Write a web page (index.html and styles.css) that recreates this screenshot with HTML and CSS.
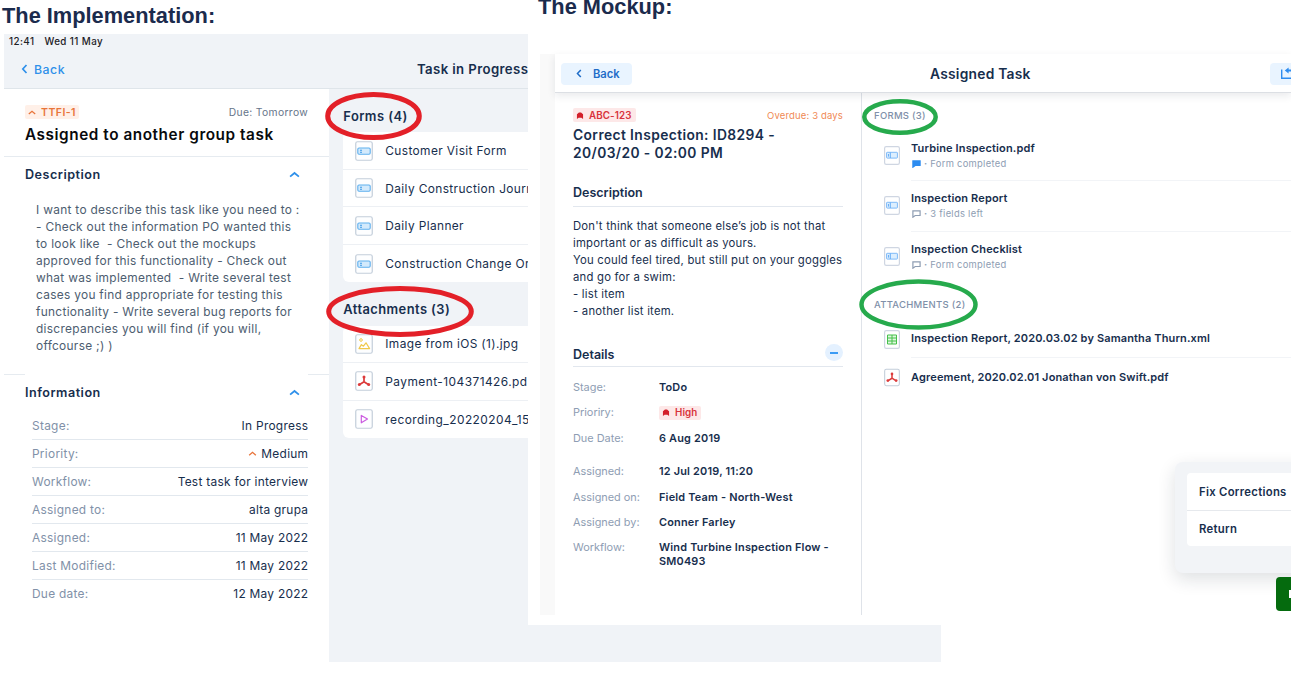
FILE: index.html
```html
<!DOCTYPE html>
<html lang="en">
<head>
<meta charset="utf-8">
<title>Task screens comparison</title>
<link rel="stylesheet" href="styles.css">
</head>
<body>
<svg class="defs" width="0" height="0">
  <symbol id="form" viewBox="0 0 18 20"><rect x=".75" y=".75" width="16.5" height="18.5" rx="1.8" fill="#fdfeff" stroke="#c3ceda" stroke-width="1.2"/><rect x="2.8" y="7" width="12.4" height="6.2" rx="1.2" fill="#d3eafc" stroke="#5fb0ee" stroke-width="1.1"/><path d="M5 9.2h2M5 11.2h2" stroke="#3d9be8" stroke-width="1.1"/></symbol>
  <symbol id="form2" viewBox="0 0 16 19"><rect x=".6" y=".6" width="14.8" height="17.8" rx="1.6" fill="#fff" stroke="#cfd6e2" stroke-width="1.2"/><rect x="2.6" y="6.3" width="10.8" height="5.8" rx=".6" fill="#dceefe" stroke="#7db9f8"/><path d="M4.5 8v2.6M6.3 6.5v5.5" stroke="#5aa6f5" stroke-width=".9"/></symbol>
  <symbol id="image" viewBox="0 0 18 20"><rect x=".75" y=".75" width="16.5" height="18.5" rx="1.8" fill="#fdfeff" stroke="#c3ceda" stroke-width="1.2"/><path d="M4 14.6l2.4-4 2 1.6 2.6-3.4 3.6 5.8z" fill="none" stroke="#f0c84a" stroke-width="1.2" stroke-linejoin="round"/><circle cx="6" cy="6" r="1.3" fill="none" stroke="#f0c84a"/></symbol>
  <symbol id="pdf" viewBox="0 0 18 20"><rect x=".75" y=".75" width="16.5" height="18.5" rx="1.8" fill="#fff" stroke="#c3ceda" stroke-width="1.2"/><path d="M9 6v4.800L4.300 13.700M9 10.800l4.700 2.900" fill="none" stroke="#dc3b3b" stroke-width="1.7"/><circle cx="9" cy="6" r="1.5" fill="#dc3b3b"/><circle cx="4.3" cy="13.5" r="1.5" fill="#dc3b3b"/><circle cx="13.7" cy="13.5" r="1.5" fill="#dc3b3b"/></symbol>
  <symbol id="video" viewBox="0 0 18 20"><rect x=".75" y=".75" width="16.5" height="18.5" rx="1.8" fill="#fdfeff" stroke="#c3ceda" stroke-width="1.2"/><path d="M6.3 6.4v7.4l6.2-3.7z" fill="none" stroke="#cb5be0" stroke-width="1.2" stroke-linejoin="round"/></symbol>
  <symbol id="sheet" viewBox="0 0 16 19"><rect x=".6" y=".6" width="14.8" height="17.8" rx="1.6" fill="#fff" stroke="#cfd6e2" stroke-width="1.2"/><path d="M3.500 5h9v9h-9zM3.500 8h9M3.500 11h9M8 5v9" fill="#e0f7e0" stroke="#45c04b" stroke-width="1"/></symbol>
  <symbol id="up" viewBox="0 0 10 6"><path d="M1 5l4-3.4L9 5" fill="none" stroke="currentColor" stroke-width="1.6"/></symbol>
  <symbol id="left" viewBox="0 0 6 10"><path d="M5 1L1.3 5 5 9" fill="none" stroke="currentColor" stroke-width="1.7"/></symbol>
  <symbol id="high" viewBox="0 0 8 8"><path d="M.5 2.600L2.800.5h2.400l2.300 2.100V8L5.600 6.600H2.400L.5 8z" fill="#d3202a"/></symbol>
  <symbol id="bubble" viewBox="0 0 9 8"><path d="M.9.9h7.2v4.6H3.2L.9 7.2z" fill="var(--bubble, none)" stroke="currentColor" stroke-width="1.2"/></symbol>
</svg>

<section class="impl">
  <h1 class="caption">The Implementation:</h1>
  <div class="ipad">
    <header class="ibar">
      <div class="status"><span>12:41</span><span>Wed 11 May</span></div>
      <div class="inav">
        <a class="iback"><svg width="7" height="10"><use href="#left"/></svg><span>Back</span></a>
        <span class="ititle">Task in Progress</span>
      </div>
    </header>
    <div class="ibody">
      <aside class="iside">
        <div class="ihead">
          <div class="split"><span class="badge orange"><svg width="8" height="5"><use href="#up"/></svg><span>TTFI-1</span></span><span class="idue">Due: Tomorrow</span></div>
          <h2 class="iname">Assigned to another group task</h2>
        </div>
        <div class="isec"><span>Description</span><svg width="11" height="7"><use href="#up"/></svg></div>
        <p class="idesc">I want to describe this task like you need to :<br>- Check out the information PO wanted this<br>to look like&nbsp; - Check out the mockups<br>approved for this functionality - Check out<br>what was implemented&nbsp; - Write several test<br>cases you find appropriate for testing this<br>functionality - Write several bug reports for<br>discrepancies you will find (if you will,<br>offcourse ;) )</p>
        <div class="irule"></div>
        <div class="isec info"><span>Information</span><svg width="11" height="7"><use href="#up"/></svg></div>
        <dl class="irows">
          <div><dt>Stage:</dt><dd>In Progress</dd></div>
          <div><dt>Priority:</dt><dd><svg width="9" height="5"><use href="#up"/></svg><span>Medium</span></dd></div>
          <div><dt>Workflow:</dt><dd>Test task for interview</dd></div>
          <div><dt>Assigned to:</dt><dd>alta grupa</dd></div>
          <div><dt>Assigned:</dt><dd>11 May 2022</dd></div>
          <div><dt>Last Modified:</dt><dd>11 May 2022</dd></div>
          <div><dt>Due date:</dt><dd>12 May 2022</dd></div>
        </dl>
      </aside>
      <main class="imain">
        <h3 class="ilabel">Forms (4)</h3>
        <ul class="ilist">
          <li><svg width="18" height="20"><use href="#form"/></svg><span>Customer Visit Form</span></li>
          <li><svg width="18" height="20"><use href="#form"/></svg><span>Daily Construction Journ</span></li>
          <li><svg width="18" height="20"><use href="#form"/></svg><span>Daily Planner</span></li>
          <li><svg width="18" height="20"><use href="#form"/></svg><span>Construction Change Or</span></li>
        </ul>
        <h3 class="ilabel">Attachments (3)</h3>
        <ul class="ilist">
          <li><svg width="18" height="20"><use href="#image"/></svg><span>Image from iOS (1).jpg</span></li>
          <li><svg width="18" height="20"><use href="#pdf"/></svg><span class="wide">Payment-104371426.pd</span></li>
          <li><svg width="18" height="20"><use href="#video"/></svg><span class="wide">recording_20220204_15</span></li>
        </ul>
      </main>
    </div>
  </div>
</section>

<section class="mock">
  <h1 class="caption">The Mockup:</h1>
  <div class="mapp">
    <header class="mbar">
      <a class="mback"><svg width="6" height="9"><use href="#left"/></svg><span>Back</span></a>
      <span class="mtitle">Assigned Task</span>
      <a class="mshare"><svg width="14" height="12" viewBox="0 0 14 12"><path d="M1.700 1.600v8.700H13" fill="none" stroke="#2d8cf0" stroke-width="1.4"/><path d="M4.800 2.600L8.600-.4v2H13v2H8.600v2z" fill="#2d8cf0"/></svg></a>
    </header>
    <div class="mbody">
      <aside class="mside">
        <div class="split"><span class="badge red"><svg width="8" height="7"><use href="#high"/></svg><span>ABC-123</span></span><span class="mdue">Overdue: 3 days</span></div>
        <h2 class="mname">Correct Inspection: ID8294 -<br>20/03/20 - 02:00 PM</h2>
        <h3 class="msec">Description</h3>
        <p class="mdesc">Don't think that someone else’s job is not that<br>important or as difficult as yours.<br>You could feel tired, but still put on your goggles<br>and go for a swim:<br>- list item<br>- another list item.</p>
        <h3 class="msec details"><span>Details</span><i class="minus"></i></h3>
        <dl class="mrows">
          <dt>Stage:</dt><dd>ToDo</dd>
          <dt>Prioriry:</dt><dd><span class="badge red"><svg width="8" height="7"><use href="#high"/></svg><span>High</span></span></dd>
          <dt>Due Date:</dt><dd>6 Aug 2019</dd>
          <dt>Assigned:</dt><dd>12 Jul 2019, 11:20</dd>
          <dt>Assigned on:</dt><dd>Field Team - North-West</dd>
          <dt>Assigned by:</dt><dd>Conner Farley</dd>
          <dt>Workflow:</dt><dd>Wind Turbine Inspection Flow -<br>SM0493</dd>
        </dl>
      </aside>
      <main class="mmain">
        <h4 class="mlabel">FORMS (3)</h4>
        <ul class="mlist forms">
          <li><svg width="16" height="19"><use href="#form2"/></svg><div><b>Turbine Inspection.pdf</b><small class="filled"><svg width="9" height="8"><use href="#bubble"/></svg><span><strong>·</strong> Form completed</span></small></div></li>
          <li><svg width="16" height="19"><use href="#form2"/></svg><div><b>Inspection Report</b><small><svg width="9" height="8"><use href="#bubble"/></svg><span><strong>·</strong> 3 fields left</span></small></div></li>
          <li><svg width="16" height="19"><use href="#form2"/></svg><div><b>Inspection Checklist</b><small><svg width="9" height="8"><use href="#bubble"/></svg><span><strong>·</strong> Form completed</span></small></div></li>
        </ul>
        <h4 class="mlabel">ATTACHMENTS (2)</h4>
        <ul class="mlist files">
          <li><svg width="16" height="19"><use href="#sheet"/></svg><div><b>Inspection Report, 2020.03.02 by Samantha Thurn.xml</b></div></li>
          <li><svg width="16" height="19"><use href="#pdf"/></svg><div><b>Agreement, 2020.02.01 Jonathan von Swift.pdf</b></div></li>
        </ul>
      </main>
    </div>
  </div>
  <div class="menu"><div class="menu-items"><div>Fix Corrections</div><div>Return</div></div></div>
  <div class="go"><i></i></div>
</section>
<svg class="rings" width="1291" height="676" fill="none">
  <g stroke="#e32028" stroke-width="5"><ellipse cx="373.5" cy="116" rx="45.8" ry="21.6"/><ellipse cx="400" cy="311.5" rx="71.3" ry="22.9"/></g>
  <g stroke="#26aa4c" stroke-width="4.5"><ellipse cx="900" cy="117" rx="35.7" ry="15.7"/><ellipse cx="918.5" cy="304.5" rx="57" ry="23"/></g>
</svg>
</body>
</html>
```
FILE: styles.css
```css
* { box-sizing: border-box; }
body { margin: 0; width: 1291px; height: 676px; position: relative; overflow: hidden; background: #fff; color: #172e4d; font-family: Inter, "Liberation Sans", sans-serif; }
h1, h2, h3, h4, p, ul, dl, dd { margin: 0; padding: 0; }
ul { list-style: none; }
svg { flex: none; }
.defs { position: absolute; }
.caption { font: bold 21.8px/26px "Liberation Sans", Arial, sans-serif; color: #1b2b4d; white-space: nowrap; }
.split { display: flex; justify-content: space-between; align-items: center; }
.badge { display: inline-flex; align-items: center; height: 14px; border-radius: 2px; font-weight: 600; }

/* Implementation: iPad screen */
.impl { padding: 3px 0 0 2px; width: 941px; }
.ipad { margin: 5px 0 0 2px; width: 937px; height: 628px; background: #f0f3f7; }
.ibar { height: 55px; border-bottom: 1px solid #dfe5ea; }
.status { display: flex; gap: 10px; padding: 1px 0 0 5px; font-size: 9.8px; line-height: 14px; font-weight: 500; letter-spacing: .42px; color: #1d2126; }
.inav { display: flex; align-items: center; height: 40px; padding-left: 17px; }
.iback { display: flex; align-items: center; gap: 6px; width: 396px; font-size: 12.3px; font-weight: 500; letter-spacing: .5px; color: #2e90ea; }
.ititle { font-size: 13.2px; font-weight: 600; letter-spacing: .38px; white-space: nowrap; }
.ibody { display: flex; height: 573px; }
.iside { width: 325px; background: #fff; }
.ihead { height: 68px; padding: 16px 21px 0; border-bottom: 1px solid #e6ebf0; }
.orange { gap: 5px; padding: 0 3px; background: #fff0e8; color: #e8743a; font-size: 10.5px; letter-spacing: .45px; }
.idue { font-size: 10.3px; letter-spacing: .35px; color: #66758a; }
.iname { margin-top: 5px; font-size: 15.3px; line-height: 21px; font-weight: 600; letter-spacing: .57px; color: #080a0d; white-space: nowrap; }
.isec { display: flex; justify-content: space-between; align-items: center; height: 36px; padding: 0 29px 2px 21px; font-size: 12.6px; font-weight: 600; letter-spacing: .5px; }
.isec svg { color: #2e90ea; }
.info { padding-bottom: 0; }
.idesc { padding: 8px 0 0 32px; font-size: 11.9px; line-height: 17.05px; letter-spacing: .3px; color: #4d5d70; white-space: nowrap; }
.irule { height: 1px; margin-top: 19.5px; display: flex; justify-content: space-between; }
.irule::before, .irule::after { content: ""; width: 21px; height: 1px; background: #e6ebf0; }
.irows { margin: 1px 20.7px 0 28px; font-size: 11.9px; letter-spacing: .28px; }
.irows > div { display: flex; justify-content: space-between; align-items: center; height: 27.95px; border-bottom: 1px solid #e2e8ee; }
.irows > div:last-child { border: 0; }
.irows dt { color: #8191a8; }
.irows dd { display: flex; align-items: center; gap: 4px; }
.irows dd svg { color: #e8743a; }
.imain { flex: 1; padding-left: 14.3px; }
.ilabel { height: 43.3px; padding-top: 19px; font-size: 12.9px; line-height: 18px; font-weight: 600; letter-spacing: .44px; }
.ilist { background: #fff; border-radius: 6px; }
.ilist li { display: flex; align-items: center; gap: 12px; height: 37.5px; padding-left: 12px; border-bottom: 1px solid #edf0f4; font-size: 11.9px; letter-spacing: .38px; white-space: nowrap; }
.ilist li:last-child { border: 0; }
.ilist .wide { letter-spacing: .46px; }

/* Mockup: laid over the right part of the iPad screen */
.mock { position: absolute; left: 528px; top: 0; width: 763px; height: 625px; overflow: hidden; background: #fff; }
.mock .caption { margin: -6px 0 0 10px; }
.mapp { margin: 34px 0 0 12px; height: 561px; border-left: 15px solid #f9f9f9; }
.mbar { position: relative; display: flex; align-items: center; height: 39px; padding-left: 6px; border-bottom: 1px solid #dcdfe4; box-shadow: 0 3px 8px #15203018; }
.mback { flex: none; display: flex; align-items: center; gap: 11px; width: 71px; height: 22px; margin-top: 1px; padding-left: 15px; border-radius: 4px; background: #e9f4ff; color: #1f6dc8; font-size: 11.2px; font-weight: 600; }
.mtitle { margin: 2px 0 0 298px; font-size: 13.8px; font-weight: 600; letter-spacing: .25px; white-space: nowrap; }
.mshare { position: absolute; left: 715px; top: 9px; display: flex; align-items: center; height: 22px; width: 60px; padding-left: 10px; border-radius: 4px; background: #e9f4ff; }
.mshare svg { overflow: visible; }
.mbody { display: flex; height: 522px; }
.mside { width: 307px; padding: 15px 18px 0; border-right: 1px solid #dfe3e9; }
.red { gap: 5px; padding: 0 4px 0 3px; background: #fde8e8; color: #d8333b; font-size: 9.8px; letter-spacing: .1px; }
.mdue { font-size: 9.5px; letter-spacing: .15px; color: #f08a55; }
.mname { margin-top: 5px; font-size: 13.8px; line-height: 17.5px; font-weight: 600; letter-spacing: .4px; white-space: nowrap; }
.msec { display: flex; align-items: center; justify-content: space-between; margin-top: 21px; height: 24px; padding-bottom: 5px; font-size: 12.5px; font-weight: 600; border-bottom: 1px solid #e2e7ee; }
.mdesc { margin-top: 11px; font-size: 11.3px; line-height: 17px; letter-spacing: .22px; white-space: nowrap; }
.details { height: 25px; margin-top: 22.4px; padding: 0; }
.minus { width: 18px; height: 17px; margin-bottom: 3px; border-radius: 50%; background: #e4f1ff; display: grid; place-items: center; }
.minus::before { content: ""; width: 8px; height: 2px; background: #3a9bf5; }
.mrows { display: grid; grid-template-columns: 86px 1fr; grid-template-rows: 25.4px 25.4px 33.6px 25.4px 25.4px 25.2px 28px; margin-top: 12.6px; font-size: 10.9px; line-height: 14px; white-space: nowrap; }
.mrows dt { color: #8e9db3; }
.mrows dd { font-weight: 600; letter-spacing: .2px; }
.mmain { flex: 1; padding-left: 12px; }
.mlabel { padding-top: 16px; height: 38px; font-size: 9.5px; line-height: 14px; font-weight: 500; letter-spacing: .28px; color: #8090a9; }
.mlist li { display: flex; gap: 11px; padding-left: 10px; white-space: nowrap; }
.mlist div { flex: 1; border-bottom: 1px solid #f2f4f7; }
.mlist li:last-child div { border: 0; }
.mlist b { display: block; font-size: 11px; line-height: 17px; font-weight: 600; letter-spacing: .14px; }
.mlist small { display: flex; align-items: center; gap: 3px; padding-left: 1px; font-size: 9.4px; line-height: 14px; letter-spacing: .28px; color: #8e9db3; }
.filled { --bubble: #2d8cf0; }
.filled svg { color: #2d8cf0; }
.forms li { height: 50.4px; padding-top: 9px; }
.forms li > svg { margin-top: 6px; }
.mlist.files li { height: 38px; align-items: center; }
.mlist.files div { height: 38px; display: flex; align-items: center; }
.menu { position: absolute; left: 647px; top: 462px; width: 200px; height: 111px; padding: 11px 12px; border-radius: 8px; background: #f2f4f7; box-shadow: 0 6px 18px #15203024; }
.menu-items { width: 104px; height: 73px; border-radius: 4px 0 0 4px; background: #fff; font-size: 11.3px; font-weight: 600; letter-spacing: .3px; white-space: nowrap; }
.menu-items div { display: flex; align-items: center; height: 36.5px; padding: 1px 0 0 12px; }
.menu-items div + div { border-top: 1px solid #e6e9ed; }
.go { position: absolute; left: 748px; top: 577px; width: 40px; height: 34px; padding: 13px; border-radius: 4px; background: #056b0e; }
.go i { display: block; width: 3px; height: 8px; background: #fff; }
.rings { position: absolute; left: 0; top: 0; }
```
